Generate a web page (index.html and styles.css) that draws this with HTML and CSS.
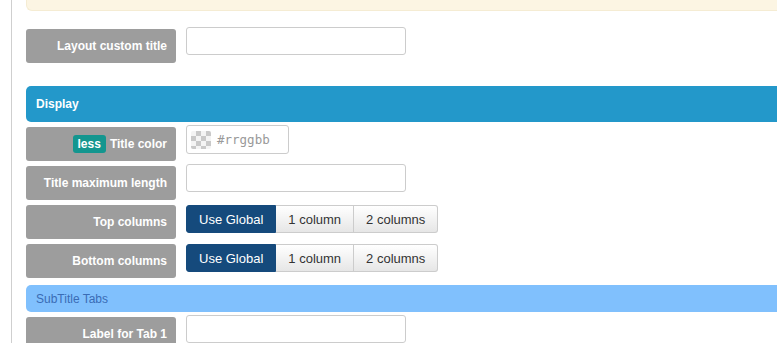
FILE: index.html
```html
<!DOCTYPE html>
<html lang="en">
<head>
    <meta charset="UTF-8">
    <meta name="viewport" content="width=device-width, initial-scale=1.0">
    <title>Module settings</title>
    <link rel="stylesheet" href="styles.css">
</head>
<body>
    <div class="panel">
        <div class="notice"></div>

        <div class="field first">
            <label class="field-label">Layout custom title</label>
            <input type="text" class="text-input">
        </div>

        <div class="section-head">Display</div>

        <div class="field">
            <label class="field-label"><span class="less-badge">less</span> Title color</label>
            <div class="color-input">
                <span class="swatch"></span>
                <span class="color-hint">#rrggbb</span>
            </div>
        </div>

        <div class="field">
            <label class="field-label">Title maximum length</label>
            <input type="text" class="text-input">
        </div>

        <div class="field">
            <label class="field-label">Top columns</label>
            <div class="btn-group">
                <button class="btn active">Use Global</button>
                <button class="btn">1 column</button>
                <button class="btn">2 columns</button>
            </div>
        </div>

        <div class="field">
            <label class="field-label">Bottom columns</label>
            <div class="btn-group">
                <button class="btn active">Use Global</button>
                <button class="btn">1 column</button>
                <button class="btn">2 columns</button>
            </div>
        </div>

        <div class="sub-head">SubTitle Tabs</div>

        <div class="field">
            <label class="field-label">Label for Tab 1</label>
            <input type="text" class="text-input">
        </div>
    </div>
</body>
</html>
```

FILE: styles.css
```css
body {
    margin: 0;
    font-family: 'Liberation Sans', Arial, sans-serif;
    background: #fff;
    overflow: hidden;
}

.panel {
    margin-left: 11px;
    border-left: 1px solid #cfcfcf;
    padding-left: 14px;
    width: 900px;
    height: 343px;
}

.notice {
    height: 10px;
    background: #fcf5e3;
    border-bottom: 1px solid #f5ecd3;
    border-left: 1px solid #f5ecd3;
    border-radius: 0 0 0 6px;
}

.field {
    display: flex;
    align-items: flex-start;
    gap: 10px;
    margin-bottom: 3px;
}

.field.first {
    margin-top: 16px;
}

.field-label {
    box-sizing: border-box;
    width: 150px;
    height: 34px;
    margin-top: 2px;
    padding-right: 9px;
    display: flex;
    align-items: center;
    justify-content: flex-end;
    gap: 4px;
    background: #9d9d9d;
    border-radius: 3px;
    color: #fff;
    font-size: 12px;
    font-weight: bold;
}

.less-badge {
    display: inline-block;
    height: 18px;
    line-height: 18px;
    padding: 0 5px;
    background: #13968f;
    border-radius: 3px;
    font-size: 12px;
}

.text-input {
    box-sizing: border-box;
    width: 220px;
    height: 28px;
    margin: 0;
    border: 1px solid #cccccc;
    border-radius: 3px;
    background: #fff;
}

.color-input {
    box-sizing: border-box;
    width: 103px;
    height: 29px;
    display: flex;
    align-items: center;
    gap: 6px;
    padding-left: 4px;
    border: 1px solid #cccccc;
    border-radius: 3px;
}

.swatch {
    width: 20px;
    height: 18px;
    border-radius: 2px;
    background-color: #f4f4f4;
    background-image:
        linear-gradient(45deg, #c9c9c9 25%, transparent 25%, transparent 75%, #c9c9c9 75%),
        linear-gradient(45deg, #c9c9c9 25%, transparent 25%, transparent 75%, #c9c9c9 75%);
    background-size: 10px 10px;
    background-position: 0 0, 5px 5px;
}

.color-hint {
    font-family: 'DejaVu Sans Mono', monospace;
    font-size: 12.5px;
    color: #999;
}

.btn-group {
    display: flex;
    margin-top: 2px;
}

.btn {
    height: 28px;
    padding: 0 12px;
    margin: 0;
    white-space: nowrap;
    font-family: 'Liberation Sans', Arial, sans-serif;
    font-size: 13px;
    color: #333;
    background: linear-gradient(#ffffff, #e6e6e6);
    border: 1px solid #cccccc;
    border-left: none;
}

.btn:first-child {
    border-left: 1px solid #cccccc;
    border-radius: 3px 0 0 3px;
}

.btn:last-child {
    border-radius: 0 3px 3px 0;
}

.btn.active {
    background: #154a7c;
    border-color: #154a7c;
    color: #fff;
}

.section-head {
    height: 36px;
    margin-top: 23px;
    margin-bottom: 3px;
    padding-left: 10px;
    display: flex;
    align-items: center;
    background: #2398ca;
    border-radius: 5px 0 0 5px;
    color: #fff;
    font-size: 12px;
    font-weight: bold;
}

.sub-head {
    height: 27px;
    margin-top: 7px;
    margin-bottom: 3px;
    padding-left: 10px;
    display: flex;
    align-items: center;
    background: #80c0fd;
    border-radius: 5px 0 0 5px;
    color: #3a6cb5;
    font-size: 12px;
}
```
